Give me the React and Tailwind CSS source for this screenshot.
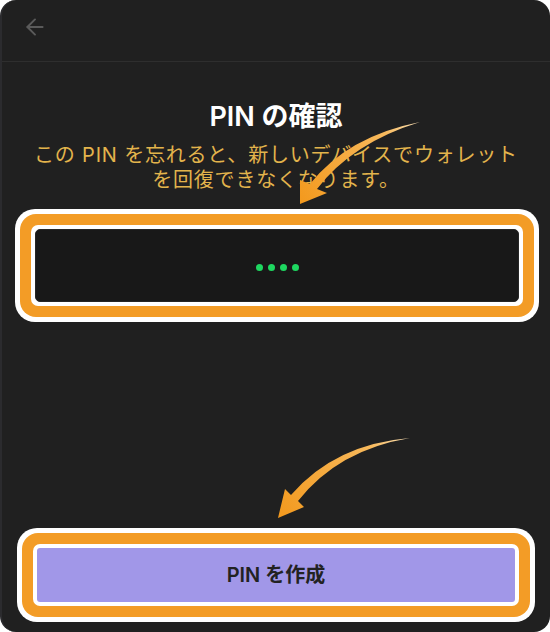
import { ArrowLeft } from 'lucide-react';

const font = { fontFamily: 'Inter, "Noto Sans CJK JP", sans-serif' };

function Highlight({ children, className = '' }) {
  // annotation ring: white / orange / white
  return (
    <div className={`bg-white rounded-[20px] p-[5px] ${className}`}>
      <div className="bg-[#f39c26] rounded-[16px] p-[11px]">
        <div className="bg-white rounded-[7px] p-[4px]">{children}</div>
      </div>
    </div>
  );
}

function Arrows() {
  return (
    <svg className="absolute inset-0 pointer-events-none" width="550" height="632" viewBox="0 0 550 632">
      <defs>
        <linearGradient id="a1" gradientUnits="userSpaceOnUse" x1="418" y1="122" x2="300" y2="200">
          <stop offset="0" stopColor="#fbe2b8" />
          <stop offset="0.25" stopColor="#f7b95c" />
          <stop offset="1" stopColor="#f39a1f" />
        </linearGradient>
        <linearGradient id="a2" gradientUnits="userSpaceOnUse" x1="408" y1="438" x2="278" y2="515">
          <stop offset="0" stopColor="#fbe2b8" />
          <stop offset="0.25" stopColor="#f7b95c" />
          <stop offset="1" stopColor="#f39a1f" />
        </linearGradient>
      </defs>
      <path d="M418,122 Q350,143 315,189 L325,193 L298,204 L298,180 L308,184 Q346,136 418,122 Z" fill="url(#a1)" />
      <path d="M408,438 Q336,450 296,501 L302,507 L276,518 L283,489 L289,495 Q333,444 408,438 Z" fill="url(#a2)" />
    </svg>
  );
}

export default function App() {
  return (
    <div className="w-[550px] h-[632px] bg-white" style={font}>
      <div className="relative w-full h-full rounded-[16px] bg-[#202020] border-l-2 border-[#2b2b2e] flex flex-col overflow-hidden">
        {/* header */}
        <div className="h-[62px] flex items-start pt-[14px] px-[20px] border-b border-[#2e2e2e] shrink-0">
          <ArrowLeft size={26} strokeWidth={1.8} className="text-[#5a5a5a]" />
        </div>

        {/* title */}
        <div className="pt-[39px] px-4 text-center">
          <h1 className="text-[27px] leading-[32px] font-semibold text-white">PIN の確認</h1>
          <p className="mt-[10px] text-[20px] leading-[25px] tracking-[0.8px] text-[#e3b44c]">
            <span className="whitespace-nowrap">この PIN を忘れると、新しいデバイスでウォレット</span>
            <br />を回復できなくなります。
          </p>
        </div>

        {/* pin field */}
        <Highlight className="mt-[16px] ml-[13px] mr-[11px]">
          <div className="h-[73px] rounded-[5px] bg-[#181818] border border-[#262626] flex items-center justify-center gap-[5px] pt-[4px]">
            {[0, 1, 2, 3].map(i => (
              <span key={i} className="w-[7px] h-[7px] rounded-full bg-[#1ed760]" />
            ))}
          </div>
        </Highlight>

        {/* create button */}
        <Highlight className="mt-auto mb-[10px] ml-[15px] mr-[15px]">
          <button className="w-full h-[54px] rounded-[3px] bg-[#a197e8] text-[20px] font-semibold text-[#222222]">
            PIN を作成
          </button>
        </Highlight>

        <Arrows />
      </div>
    </div>
  );
}
